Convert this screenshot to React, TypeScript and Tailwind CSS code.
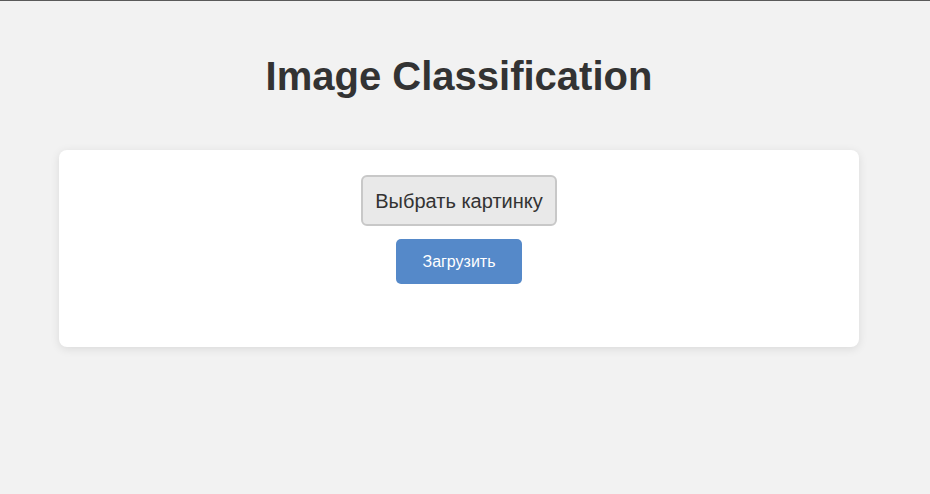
export default function App() {
  return (
    <div className="min-h-[494px] w-full bg-[#f2f2f2] border-t border-[#5a5a5a] font-['Liberation_Sans',Arial,sans-serif]">
      <div className="w-[918px]">
        <h1 className="pt-[45px] text-center text-[40px] leading-[60px] font-bold text-[#333333]">
          Image Classification
        </h1>
        <div className="mx-[59px] mt-[44px] h-[197px] rounded-lg bg-white shadow-[0_2px_10px_rgba(0,0,0,0.1)] flex flex-col items-center pt-[25px]">
          <button className="h-[51px] w-[196px] rounded-md border-2 border-[#c8c8c8] bg-[#e9e9e9] text-[20px] text-[#333333]">
            Выбрать картинку
          </button>
          <button className="mt-[13px] h-[45px] w-[126px] rounded-[5px] bg-[#5589c9] text-[16px] text-white">
            Загрузить
          </button>
        </div>
      </div>
    </div>
  );
}
